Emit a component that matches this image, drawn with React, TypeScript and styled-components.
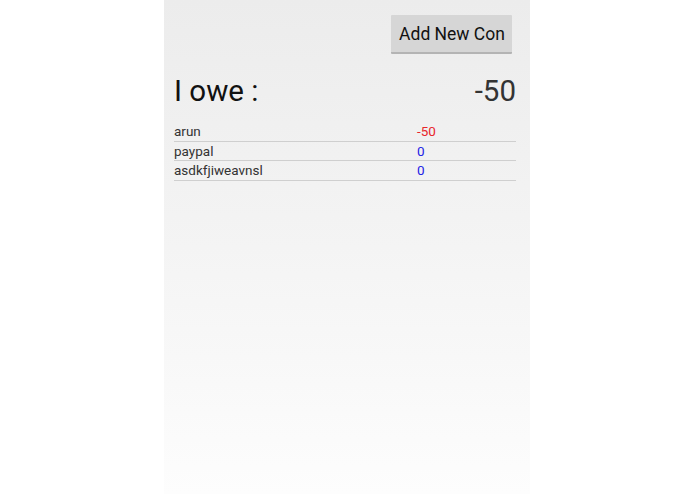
import React from "react"
import styled, { createGlobalStyle } from "styled-components"

const GlobalStyle = createGlobalStyle`
  html, body {
    margin: 0;
    padding: 0;
    background: #ffffff;
  }
  body {
    font-family: Roboto, "Liberation Sans", sans-serif;
  }
`

interface Debt {
  id: number
  name: string
  amount: number
}

const debts: Debt[] = [
  { id: 1, name: "arun", amount: -50 },
  { id: 2, name: "paypal", amount: 0 },
  { id: 3, name: "asdkfjiweavnsl", amount: 0 },
]

const Screen = styled.div`
  width: 366px;
  height: 494px;
  margin-left: 164px;
  box-sizing: border-box;
  padding: 15px 14px 0 10px;
  background: linear-gradient(to bottom, #ececec 0%, #f4f4f4 50%, #fdfdfd 100%);
  display: flex;
  flex-direction: column;
`

const Toolbar = styled.div`
  display: flex;
  justify-content: flex-end;
  padding-right: 4px;
`

const Button = styled.button`
  width: 121px;
  height: 39px;
  border: none;
  border-bottom: 2px solid #b4b4b4;
  border-radius: 1px;
  background: #d6d6d6;
  color: #111;
  font-family: Roboto, "Liberation Sans", sans-serif;
  font-size: 17.5px;
  padding: 0 0 0 1px;
  white-space: nowrap;
  overflow: hidden;
`

const Summary = styled.div`
  display: flex;
  justify-content: space-between;
  align-items: baseline;
  margin-top: 17px;
  height: 46px;
`

const SummaryLabel = styled.span`
  font-size: 29.5px;
  color: #111;
  line-height: 40px;
`

const SummaryValue = styled.span`
  font-size: 29.5px;
  color: #333;
  line-height: 40px;
`

const List = styled.div`
  display: flex;
  flex-direction: column;
  margin-top: 5px;
`

const Row = styled.div`
  display: grid;
  grid-template-columns: 243px 1fr;
  height: 18.5px;
  line-height: 19px;
  border-bottom: 1px solid #cfcfcf;
  font-size: 13.5px;
`

const Name = styled.span`
  color: #333;
`

const Amount = styled.span<{ $negative: boolean }>`
  color: ${({ $negative }) => ($negative ? "#e8262b" : "#2323e6")};
`

export default function App() {
  const total = debts.reduce((sum, d) => sum + d.amount, 0)
  return (
    <>
      <GlobalStyle />
      <Screen>
        <Toolbar>
          <Button>Add New Con</Button>
        </Toolbar>
        <Summary>
          <SummaryLabel>I owe :</SummaryLabel>
          <SummaryValue>{total}</SummaryValue>
        </Summary>
        <List>
          {debts.map((d) => (
            <Row key={d.id}>
              <Name>{d.name}</Name>
              <Amount $negative={d.amount < 0}>{d.amount}</Amount>
            </Row>
          ))}
        </List>
      </Screen>
    </>
  )
}
